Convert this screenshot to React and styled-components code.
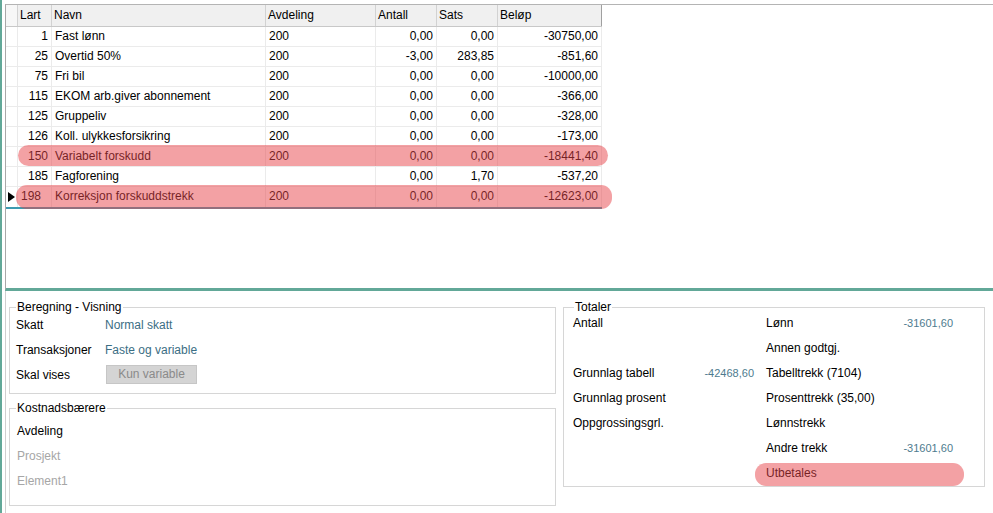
import React from 'react'
import styled, { createGlobalStyle } from 'styled-components'

const GlobalStyle = createGlobalStyle`
  html, body {
    margin: 0;
    padding: 0;
    background: #fff;
  }
  body {
    font-family: "Liberation Sans", Arial, sans-serif;
    font-size: 12px;
    color: #000;
    overflow: hidden;
  }
`

const COLS = '12px 34px 214px 110px 61px 61px 104px'

const Frame = styled.div`
  width: 993px;
  height: 513px;
  box-sizing: border-box;
  border-left: 2px solid #62a898;
  padding: 4px 0 0 3px;
  display: flex;
  flex-direction: column;
`

const GridPane = styled.div`
  height: 287px;
  flex: none;
  box-sizing: border-box;
  border-top: 1px solid #b4b4b4;
  border-left: 1px solid #a8a8a8;
  border-bottom: 3px solid #62a898;
`

const Table = styled.div`
  width: 596px;
`

const HeadRow = styled.div`
  display: grid;
  grid-template-columns: ${COLS};
  height: 22px;
  box-sizing: border-box;
  background: #f0f0f0;
  border-bottom: 1px solid #c8c8c8;
`

const HeadCell = styled.div`
  padding-left: 2px;
  line-height: 21px;
  border-right: 1px solid ${p => (p.$last ? '#a0a0a0' : '#d2d2d2')};
  background: ${p => (p.$blank ? '#f7f7f7' : 'transparent')};
  white-space: nowrap;
`

const Row = styled.div`
  position: relative;
  display: grid;
  grid-template-columns: ${COLS};
  height: ${p => (p.$current ? 22 : 20)}px;
  box-sizing: border-box;
  border-bottom: ${p => (p.$current ? '2px solid #3d9ab0' : '1px solid #ebebeb')};
`

const Cell = styled.div`
  padding: 0 3px;
  line-height: 19px;
  text-align: ${p => p.$align || 'left'};
  border-right: 1px solid #ebebeb;
  white-space: nowrap;
  overflow: hidden;
`

const Indicator = styled.div`
  border-right: 1px solid #ebebeb;
  display: flex;
  align-items: center;
`

const Arrow = styled.span`
  width: 0;
  height: 0;
  margin-left: 2px;
  border-left: 7px solid #000;
  border-top: 5px solid transparent;
  border-bottom: 5px solid transparent;
`

const Mark = styled.div`
  position: absolute;
  top: ${p => p.$top}px;
  bottom: ${p => p.$bottom}px;
  left: ${p => p.$left}px;
  right: ${p => p.$right}px;
  border-radius: 11px;
  background: rgba(231, 67, 73, 0.5);
  pointer-events: none;
`

const BottomPane = styled.div`
  flex: 1;
  display: flex;
  align-items: flex-start;
  gap: 7px;
  border-left: 1px solid #cfcfcf;
  padding: 9px 0 0 3px;
`

const LeftCol = styled.div`
  width: 547px;
  display: flex;
  flex-direction: column;
  gap: 7px;
`

const Group = styled.fieldset`
  margin: 0;
  min-width: 0;
  box-sizing: border-box;
  width: ${p => p.$width}px;
  height: ${p => p.$height}px;
  border: 1px solid #d6d6d6;
  padding: 0 0 0 ${p => p.$pad}px;
`

const Legend = styled.legend`
  padding: 0 1px;
  margin-left: ${p => p.$offset}px;
  line-height: 14px;
  font-size: 12px;
`

const FormRow = styled.div`
  display: flex;
  align-items: center;
  height: 25px;
`

const FormList = styled.div`
  margin-top: ${p => p.$shift}px;
`

const Label = styled.span`
  width: 89px;
  color: ${p => (p.$muted ? '#a6a6a6' : '#000')};
`

const Value = styled.span`
  color: #3b6e84;
`

const Button = styled.div`
  width: 91px;
  height: 19px;
  box-sizing: border-box;
  margin-left: 1px;
  background: #d4d4d4;
  border: 1px solid #c6c6c6;
  color: #8a8a8a;
  text-align: center;
  line-height: 17px;
`

const TotalsGrid = styled.div`
  display: grid;
  grid-template-columns: 120px 61px 12px 127px 60px;
  grid-auto-rows: 25px;
  margin-top: -3px;
`

const TLabel = styled.div`
  position: relative;
  line-height: 25px;
  white-space: nowrap;
  grid-column: ${p => p.$col};
`

const TValue = styled.div`
  line-height: 25px;
  font-size: 11px;
  text-align: right;
  color: #4e7b8e;
  grid-column: ${p => p.$col};
`

const rows = [
  { lart: '1', navn: 'Fast lønn', avd: '200', antall: '0,00', sats: '0,00', belop: '-30750,00' },
  { lart: '25', navn: 'Overtid 50%', avd: '200', antall: '-3,00', sats: '283,85', belop: '-851,60' },
  { lart: '75', navn: 'Fri bil', avd: '200', antall: '0,00', sats: '0,00', belop: '-10000,00' },
  { lart: '115', navn: 'EKOM arb.giver abonnement', avd: '200', antall: '0,00', sats: '0,00', belop: '-366,00' },
  { lart: '125', navn: 'Gruppeliv', avd: '200', antall: '0,00', sats: '0,00', belop: '-328,00' },
  { lart: '126', navn: 'Koll. ulykkesforsikring', avd: '200', antall: '0,00', sats: '0,00', belop: '-173,00' },
  { lart: '150', navn: 'Variabelt forskudd', avd: '200', antall: '0,00', sats: '0,00', belop: '-18441,40', mark: { top: -2, bottom: 0, left: 12, right: -6 } },
  { lart: '185', navn: 'Fagforening', avd: '', antall: '0,00', sats: '1,70', belop: '-537,20' },
  { lart: '198', navn: 'Korreksjon forskuddstrekk', avd: '200', antall: '0,00', sats: '0,00', belop: '-12623,00', current: true, mark: { top: -2, bottom: -2, left: 10, right: -10 } },
]

const totals = [
  ['Antall', '', 'Lønn', '-31601,60'],
  ['', '', 'Annen godtgj.', ''],
  ['Grunnlag tabell', '-42468,60', 'Tabelltrekk (7104)', ''],
  ['Grunnlag prosent', '', 'Prosenttrekk (35,00)', ''],
  ['Oppgrossingsgrl.', '', 'Lønnstrekk', ''],
  ['', '', 'Andre trekk', '-31601,60'],
]

function PayTable() {
  return (
    <Table>
      <HeadRow>
        <HeadCell $blank />
        <HeadCell>Lart</HeadCell>
        <HeadCell>Navn</HeadCell>
        <HeadCell>Avdeling</HeadCell>
        <HeadCell>Antall</HeadCell>
        <HeadCell>Sats</HeadCell>
        <HeadCell $last>Beløp</HeadCell>
      </HeadRow>
      {rows.map(r => (
        <Row key={r.lart} $current={r.current}>
          <Indicator>{r.current && <Arrow />}</Indicator>
          <Cell $align={r.current ? 'left' : 'right'}>{r.lart}</Cell>
          <Cell>{r.navn}</Cell>
          <Cell>{r.avd}</Cell>
          <Cell $align="right">{r.antall}</Cell>
          <Cell $align="right">{r.sats}</Cell>
          <Cell $align="right">{r.belop}</Cell>
          {r.mark && (
            <Mark $top={r.mark.top} $bottom={r.mark.bottom} $left={r.mark.left} $right={r.mark.right} />
          )}
        </Row>
      ))}
    </Table>
  )
}

function Totaler() {
  return (
    <Group $width={422} $height={187} $pad={9}>
      <Legend $offset={1}>Totaler</Legend>
      <TotalsGrid>
        {totals.map((t, i) => (
          <React.Fragment key={i}>
            <TLabel $col="1">{t[0]}</TLabel>
            <TValue $col="2">{t[1]}</TValue>
            <TLabel $col="4">{t[2]}</TLabel>
            <TValue $col="5">{t[3]}</TValue>
          </React.Fragment>
        ))}
        <TLabel $col="4 / span 2">
          Utbetales
          <Mark $top={2} $bottom={0} $left={-11} $right={-11} />
        </TLabel>
      </TotalsGrid>
    </Group>
  )
}

export default function App() {
  return (
    <>
      <GlobalStyle />
      <Frame>
        <GridPane>
          <PayTable />
        </GridPane>
        <BottomPane>
          <LeftCol>
            <Group $width={547} $height={94} $pad={6}>
              <Legend $offset={0}>Beregning - Visning</Legend>
              <FormList $shift={-2}>
                <FormRow>
                  <Label>Skatt</Label>
                  <Value>Normal skatt</Value>
                </FormRow>
                <FormRow>
                  <Label>Transaksjoner</Label>
                  <Value>Faste og variable</Value>
                </FormRow>
                <FormRow>
                  <Label>Skal vises</Label>
                  <Button>Kun variable</Button>
                </FormRow>
              </FormList>
            </Group>
            <Group $width={547} $height={105} $pad={7}>
              <Legend $offset={-1}>Kostnadsbærere</Legend>
              <FormList $shift={3}>
                <FormRow><Label>Avdeling</Label></FormRow>
                <FormRow><Label $muted>Prosjekt</Label></FormRow>
                <FormRow><Label $muted>Element1</Label></FormRow>
              </FormList>
            </Group>
          </LeftCol>
          <Totaler />
        </BottomPane>
      </Frame>
    </>
  )
}
